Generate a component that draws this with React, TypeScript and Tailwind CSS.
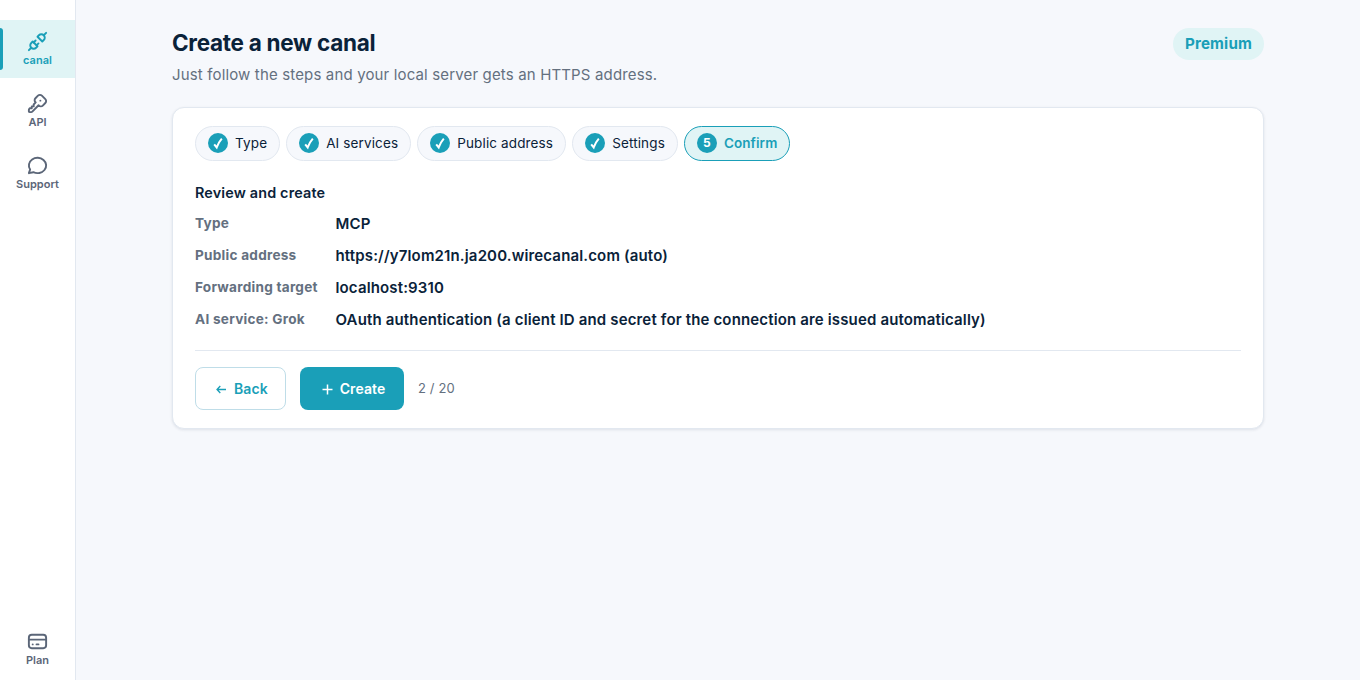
import { TbCreditCard, TbKey, TbMessageCircle, TbPlugConnected } from "react-icons/tb";
import type { IconType } from "react-icons";

function NavItem({ icon: Icon, label, active }: { icon: IconType; label: string; active?: boolean }) {
  return (
    <a
      className={
        "relative flex h-[58px] flex-col items-center justify-center text-[11px] leading-[15px] font-semibold " +
        (active ? "bg-[#e0f4f5] text-[#1a9fb8]" : "text-[#5b6678]")
      }
    >
      {active && <span className="absolute top-2 bottom-2 left-0 w-[3px] rounded-r-[3px] bg-[#1a9fb8]" />}
      <Icon size={23} />
      <span>{label}</span>
    </a>
  );
}

const steps = ["Type", "AI services", "Public address", "Settings", "Confirm"];

const rows = [
  ["Type", "MCP"],
  ["Public address", "https://y7lom21n.ja200.wirecanal.com (auto)"],
  ["Forwarding target", "localhost:9310"],
  ["AI service: Grok", "OAuth authentication (a client ID and secret for the connection are issued automatically)"],
];

export default function App() {
  return (
    <div className="flex h-[680px] bg-[#f6f8fc] font-['Inter','DejaVu_Sans',sans-serif] text-[#0a2239]">
      <nav className="flex w-[76px] shrink-0 flex-col gap-1 border-r border-[#e2e8f0] bg-white pt-5 pb-[2px]">
        <NavItem icon={TbPlugConnected} label="canal" active />
        <NavItem icon={TbKey} label="API" />
        <NavItem icon={TbMessageCircle} label="Support" />
        <div className="mt-auto">
          <NavItem icon={TbCreditCard} label="Plan" />
        </div>
      </nav>
      <main className="flex-1 pt-7 pr-24 pl-24 tracking-[0.01em]">
        <header className="flex items-start justify-between">
          <div>
            <h1 className="text-[22.5px] leading-[30px] font-bold tracking-[-0.28px]">Create a new canal</h1>
            <p className="mt-[5px] text-[15px] leading-6 tracking-[0.15px] text-[#64707f]">
              Just follow the steps and your local server gets an HTTPS address.
            </p>
          </div>
          <span className="flex h-8 items-center rounded-full bg-[#e0f4f5] px-3 text-[15.2px] font-bold tracking-[0.15px] text-[#1a9fb8]">
            Premium
          </span>
        </header>
        <section className="mt-5 h-[322px] rounded-xl border border-[#e2e8f0] bg-white px-[22px] pt-[18px] shadow-[0_1px_3px_rgba(10,34,57,0.1)]">
          <ol className="flex gap-[6px]">
            {steps.map((step, i) => {
              const current = i === 4;
              return (
                <li
                  key={step}
                  className={
                    "flex h-[35px] items-center gap-[7px] rounded-full border px-3 pb-px text-[13.5px] " +
                    (current
                      ? "border-[#1a9fb8] bg-[#e0f4f5] font-semibold tracking-[0.08px] text-[#1a9fb8]"
                      : "border-[#e2e8f0] bg-[#f6f8fc] tracking-[0.135px]")
                  }
                >
                  <span className="flex size-5 items-center justify-center rounded-full bg-[#1a9fb8] text-[12px] font-bold tracking-normal text-white">
                    {current ? (
                      "5"
                    ) : (
                      <svg width="20" height="20" viewBox="0 0 20 20" fill="none" stroke="currentColor" strokeWidth="2">
                        <path d="M6.2 11.3l2.5 3.1Q10.5 9.4 13.8 5.6" />
                      </svg>
                    )}
                  </span>
                  <span>{step}</span>
                </li>
              );
            })}
          </ol>
          <h2 className="mt-5 text-[14.4px] leading-6 font-semibold tracking-[0.16px]">Review and create</h2>
          <dl className="mt-[7px] grid grid-cols-[122.5px_1fr] gap-x-[18px] gap-y-2">
            {rows.map(([term, value]) => (
              <div key={term} className="contents">
                <dt className="text-[13.6px] leading-[22px] font-bold tracking-[0.25px] whitespace-nowrap text-[#64707f]">
                  {term}
                </dt>
                <dd className="text-[15px] leading-6 font-semibold tracking-[0.15px]">{value}</dd>
              </div>
            ))}
          </dl>
          <div className="mt-[18px] flex items-center border-t border-[#e2e8f0] pt-4">
            <button className="flex h-[43px] w-[91px] items-center justify-center gap-[6px] rounded-lg border border-[#bfdde8] pl-px text-[14px] font-semibold text-[#1a9fb8]">
              <svg width="14" height="14" viewBox="0 0 14 14" fill="none" stroke="currentColor" strokeWidth="1.3">
                <path d="M12 7.5H3M6.3 4L3 7.5l3.3 3.5" />
              </svg>
              Back
            </button>
            <button className="ml-[14px] flex h-[43px] w-[104px] items-center justify-center gap-[6px] rounded-lg bg-[#1a9fb8] pl-px text-[14px] font-semibold tracking-[0.08px] text-white">
              <svg width="14" height="14" viewBox="0 0 14 14" fill="none" stroke="currentColor" strokeWidth="1.5">
                <path d="M7.5 2.5v10M2.5 7.5h10" />
              </svg>
              Create
            </button>
            <span className="ml-[14px] text-[13px] tracking-[0.13px] text-[#64707f]">2 / 20</span>
          </div>
        </section>
      </main>
    </div>
  );
}
